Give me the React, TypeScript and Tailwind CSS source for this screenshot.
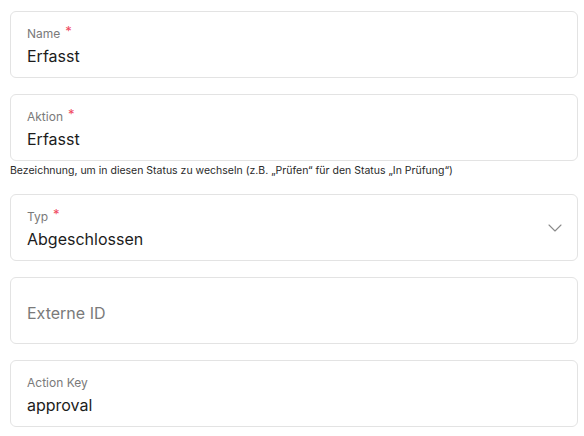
import { ChevronDown } from 'lucide-react';

type FieldProps = {
  label: string;
  value?: string;
  required?: boolean;
  placeholder?: string;
  select?: boolean;
};

function Field({ label, value, required, placeholder, select }: FieldProps) {
  if (placeholder) {
    return (
      <div className="flex h-[67px] items-center rounded-md border border-[#e3e3e3] bg-white px-4 pt-1">
        <span className="text-base text-[#7a7a7a]">{placeholder}</span>
      </div>
    );
  }
  return (
    <div className="relative h-[67px] rounded-md border border-[#e3e3e3] bg-white px-4 pt-[14px]">
      <div className="flex items-start text-xs leading-4 text-[#7a7a7a]">
        <span>{label}</span>
        {required && <span className="ml-[5px] -mt-[3px] text-[13px] text-[#ef4860]">*</span>}
      </div>
      <div className="mt-[2px] text-base leading-6 text-[#1c1c1c]">{value}</div>
      {select && (
        <ChevronDown
          className="absolute right-[10px] top-1/2 -translate-y-1/2 text-[#8a8a8a]"
          size={24}
          strokeWidth={1.1}
        />
      )}
    </div>
  );
}

export default function App() {
  return (
    <div className="bg-white pl-[10px] pr-[6px] pt-[11px] font-['Inter',sans-serif] antialiased">
      <div className="flex flex-col gap-4">
        <Field label="Name" value="Erfasst" required />
        <div>
          <Field label="Aktion" value="Erfasst" required />
          <p className="mt-[3px] text-[10.5px] leading-[14px] text-[#2a2a2a]">
            Bezeichnung, um in diesen Status zu wechseln (z.B. „Prüfen“ für den Status „In Prüfung“)
          </p>
        </div>
        <Field label="Typ" value="Abgeschlossen" required select />
        <Field label="Externe ID" placeholder="Externe ID" />
        <Field label="Action Key" value="approval" />
      </div>
    </div>
  );
}
